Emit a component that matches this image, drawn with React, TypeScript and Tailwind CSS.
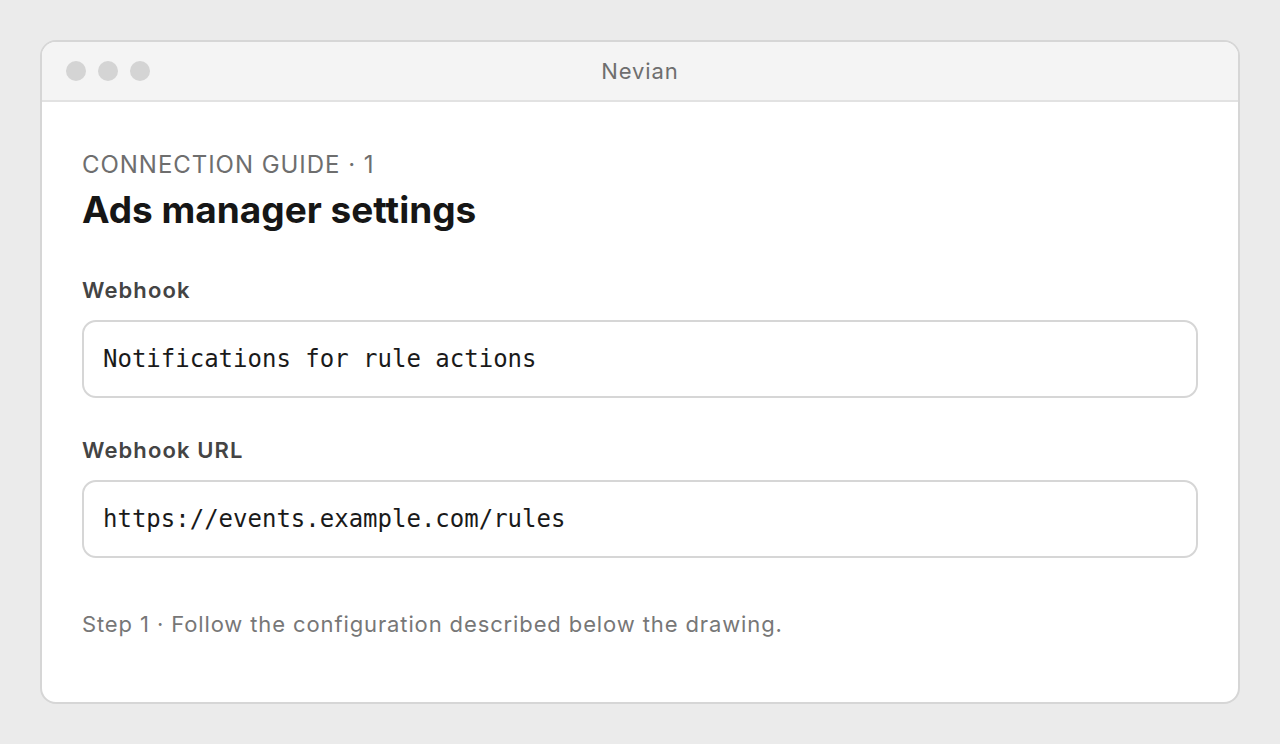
import React from 'react';

const fields = [
  { label: 'Webhook', value: 'Notifications for rule actions' },
  { label: 'Webhook URL', value: 'https://events.example.com/rules' },
];

export default function App() {
  return (
    <div className="min-h-screen bg-[#ebebeb] p-10 font-['Inter',sans-serif]">
      <div className="rounded-[16px] border-2 border-[#d6d6d6] bg-white overflow-hidden">
        {/* Title bar */}
        <div className="relative flex h-[60px] items-center border-b-2 border-[#e2e2e2] bg-[#f4f4f4] px-6">
          <div className="flex gap-3">
            <span className="h-5 w-5 rounded-full bg-[#d4d4d4]" />
            <span className="h-5 w-5 rounded-full bg-[#d4d4d4]" />
            <span className="h-5 w-5 rounded-full bg-[#d4d4d4]" />
          </div>
          <div className="absolute inset-0 flex items-center justify-center text-[22px] tracking-[0.04em] text-[#6e6e6e]">Nevian</div>
        </div>

        {/* Body */}
        <div className="px-10 pt-12 pb-16">
          <div className="text-[24px] leading-[30px] tracking-[0.04em] text-[#6e6e6e]">CONNECTION GUIDE · 1</div>
          <h1 className="mt-2 text-[37px] leading-[44px] font-bold text-[#161616]">Ads manager settings</h1>

          <div className="mt-11 flex flex-col gap-[38px]">
            {fields.map((f) => (
              <div key={f.label}>
                <div className="text-[22px] leading-[28px] font-semibold tracking-[0.05em] text-[#444444]">{f.label}</div>
                <div className="mt-4 flex h-[78px] items-center rounded-[14px] border-2 border-[#d6d6d6] pl-[19px] pr-5 font-['DejaVu_Sans_Mono',monospace] text-[24px] text-[#1a1a1a]">
                  {f.value}
                </div>
              </div>
            ))}
          </div>

          <p className="mt-[52px] text-[22px] leading-[28px] tracking-[0.04em] text-[#777777]">
            Step 1 · Follow the configuration described below the drawing.
          </p>
        </div>
      </div>
    </div>
  );
}
